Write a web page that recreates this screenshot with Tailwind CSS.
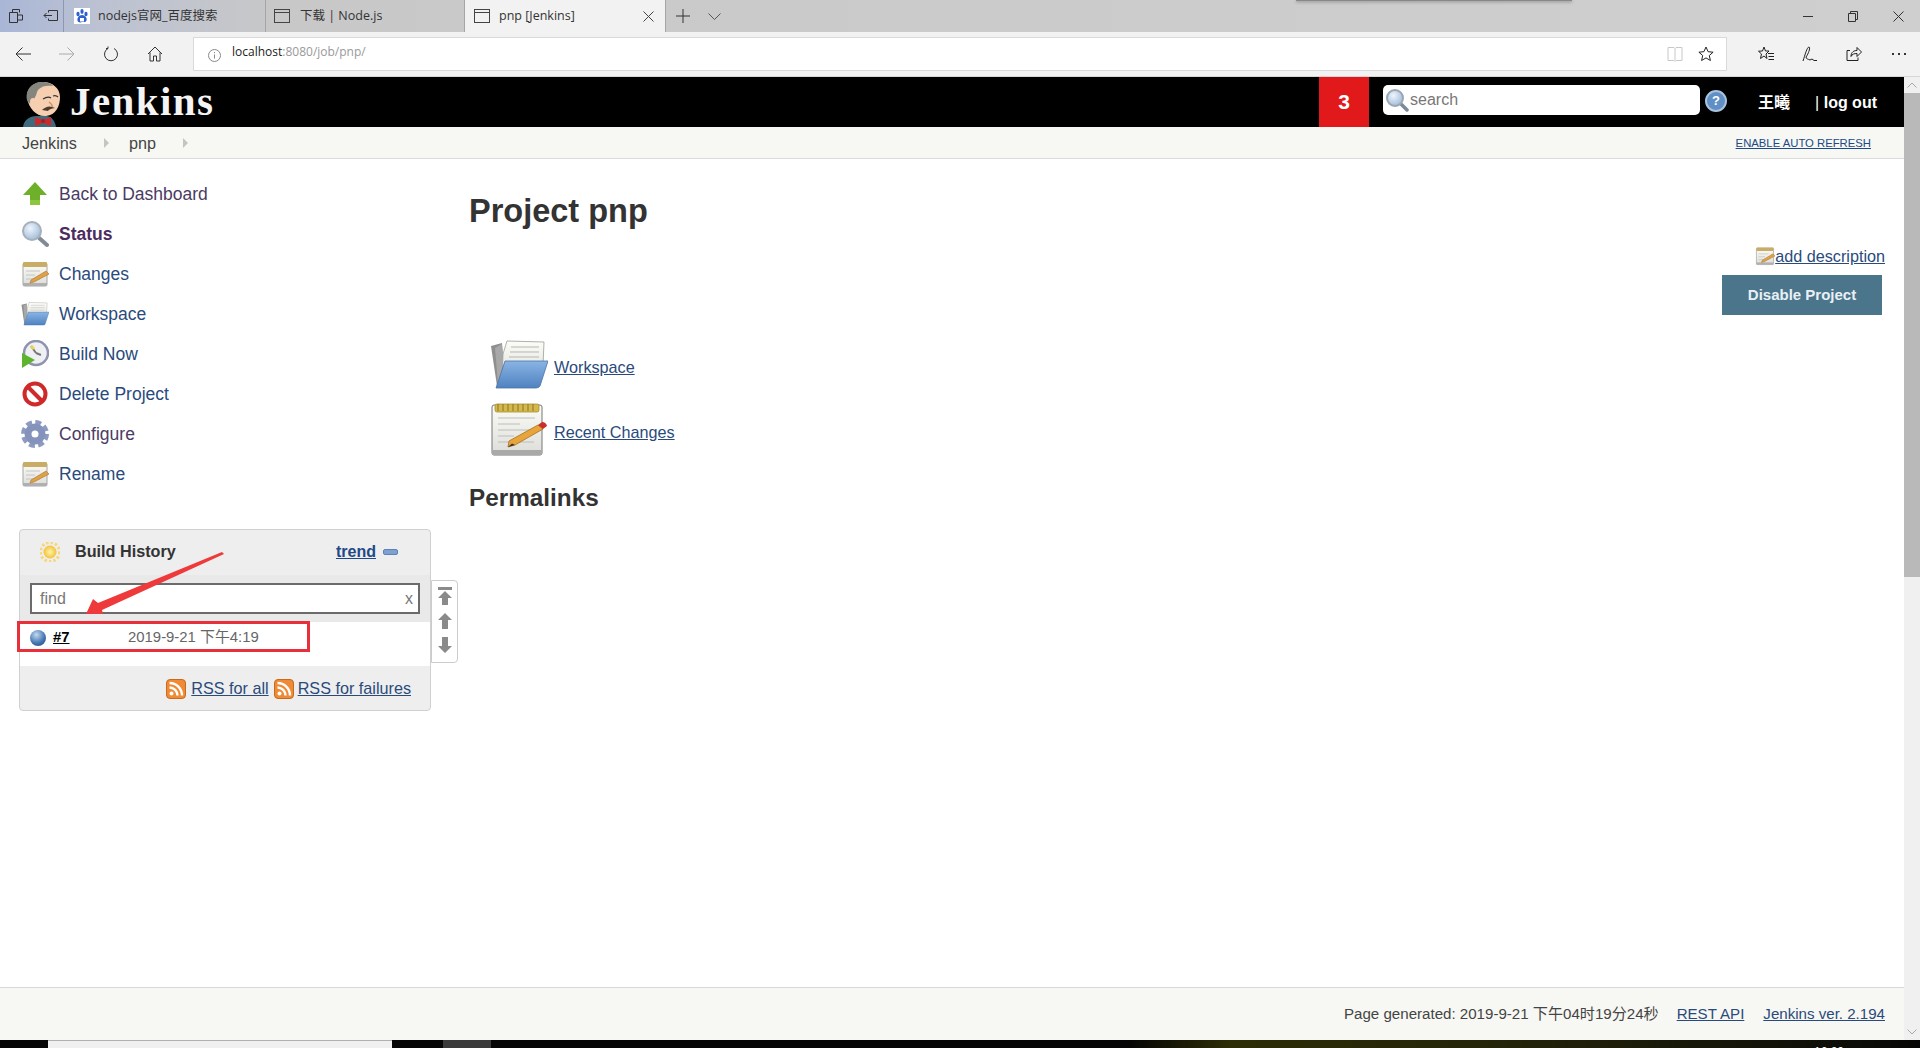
<!DOCTYPE html>
<html lang="zh-CN">
<head>
  <meta charset="UTF-8" />
  <title>pnp [Jenkins]</title>
  <script src="https://cdn.jsdelivr.net/npm/@tailwindcss/browser@4"></script>
</head>
<body class="w-[1920px] h-[1048px] overflow-hidden flex flex-col bg-white font-['Liberation_Sans','Noto_Sans_CJK_SC',sans-serif] text-[#333]">

  <!-- shared icons -->
  <svg class="absolute w-0 h-0">
    <defs>
      <linearGradient id="blueFolder" x1="0" y1="0" x2="0" y2="1"><stop offset="0" stop-color="#8ab4e4"/><stop offset="1" stop-color="#4f82c0"/></linearGradient>
      <linearGradient id="paper" x1="0" y1="0" x2="0" y2="1"><stop offset="0" stop-color="#fdfdf8"/><stop offset="1" stop-color="#dcdcd8"/></linearGradient>
      <radialGradient id="lens" cx="0.4" cy="0.35" r="0.7"><stop offset="0" stop-color="#eef5fc"/><stop offset="1" stop-color="#9dbad8"/></radialGradient>
      <radialGradient id="sun" cx="0.5" cy="0.5" r="0.5"><stop offset="0" stop-color="#fff4a8"/><stop offset="1" stop-color="#f2c23c"/></radialGradient>
      <symbol id="ic-folder" viewBox="0 0 58 50">
        <path d="M1 6 L12 3 L14 42 L7 46 Z" fill="#8f8f8f"/>
        <path d="M5 8 L12 4 L16 40 L8 44 Z" fill="#a8a8a8"/>
        <path d="M13 14 L17 1 L54 2 L53 26 L12 40 Z" fill="url(#paper)" stroke="#9a9a9a" stroke-width="0.8"/>
        <path d="M21 7 H49 M20 12 H49 M19 17 H49" stroke="#b5b5b5" stroke-width="1"/>
        <path d="M15 21 H58 L50 46 Q49 48 46 48 H6 Z" fill="url(#blueFolder)" stroke="#4a74a8" stroke-width="0.8"/>
      </symbol>
      <symbol id="ic-notepad" viewBox="0 0 58 56">
        <rect x="2" y="3" width="50" height="50" rx="2" fill="url(#paper)" stroke="#777" stroke-width="1"/>
        <rect x="2" y="48" width="50" height="5" fill="#a9a9a9"/>
        <rect x="5" y="2" width="44" height="8" rx="2" fill="#d4b84c" stroke="#a88f30" stroke-width="0.8"/>
        <path d="M8 2v7M13 2v7M18 2v7M23 2v7M28 2v7M33 2v7M38 2v7M43 2v7" stroke="#8b7526" stroke-width="1"/>
        <path d="M8 16H45M8 22H30M8 28H44M8 34H24M8 40H44" stroke="#bcbcbc" stroke-width="1"/>
        <path d="M19 39 L48 23 L53 27 L25 43 L18 45 Z" fill="#e8a53c" stroke="#a8701e" stroke-width="0.8"/>
        <path d="M48 23 L52 20 Q56 20 57 24 L53 27 Z" fill="#c9302c"/>
        <path d="M22 41.500 L18 45 L25 43 Z" fill="#333"/>
      </symbol>
      <symbol id="ic-pad-small" viewBox="0 0 28 28">
        <rect x="2" y="3" width="24" height="23" rx="1.500" fill="url(#paper)" stroke="#a5a5a5" stroke-width="1"/>
        <rect x="2" y="2" width="24" height="5" rx="1" fill="#c9ad67"/>
        <rect x="2" y="23" width="24" height="3" fill="#b0b0b0"/>
        <path d="M5 11H19M5 15H14M5 19H19" stroke="#c4c4c4" stroke-width="1"/>
        <path d="M10 20 L25 11 L28 14 L13 22 L9 23 Z" fill="#dfa048" stroke="#a9752a" stroke-width="0.6"/>
      </symbol>
      <symbol id="ic-rss" viewBox="0 0 20 20">
        <rect x="0.500" y="0.500" width="19" height="19" rx="3.500" fill="#ef8a35" stroke="#c96a1e" stroke-width="1"/>
        <circle cx="5.500" cy="14.500" r="2" fill="#fff"/>
        <path d="M3.500 8.500a8 8 0 0 1 8 8M3.500 4a12.500 12.500 0 0 1 12.500 12.500" fill="none" stroke="#fff" stroke-width="2.400"/>
      </symbol>
    </defs>
  </svg>

  <!-- browser tab strip -->
  <div class="h-8 flex shrink-0 text-[12.500px] text-[#333] bg-[linear-gradient(90deg,#a9b6d6_0,#bcc2d2_100px,#c8c8c8_280px,#cfcfcf_1920px)] font-['Open_Sans','Noto_Sans_CJK_SC',sans-serif]">
    <div class="w-[64px] flex items-center border-r border-[#8c97b3] pl-[9px] gap-[20px]">
      <svg class="w-[14px] h-[14px]" viewBox="0 0 14 14" fill="none" stroke="#333"><path d="M3.500 3.500V.5h7v3M.5 3.500h8v10h-8zM8.500 6h5v5h-5"/></svg>
      <svg class="w-[16px] h-[14px]" viewBox="0 0 16 14" fill="none" stroke="#333"><path d="M5.500 3.500V1.500h9v10h-9V9.500M9 6.500H1M3.500 4L1 6.500 3.500 9"/></svg>
    </div>
    <div class="w-[202px] flex items-center border-r border-[#a5a5a5] pl-[10px]">
      <svg class="w-4 h-4 mr-[8px]" viewBox="0 0 16 16"><rect width="16" height="16" fill="#fff"/><ellipse cx="4" cy="6" rx="1.600" ry="2.200" fill="#2f5fd0"/><ellipse cx="8" cy="3.500" rx="1.600" ry="2.400" fill="#2f5fd0"/><ellipse cx="12" cy="6" rx="1.600" ry="2.200" fill="#2f5fd0"/><path d="M8 7c-3 0-5 3-4.500 5.500S7 14.500 8 14s3.500 1 4.500-1.500S11 7 8 7z" fill="#2f5fd0"/><rect x="6" y="10" width="4" height="3.500" fill="#fff"/></svg>
      <span>nodejs官网_百度搜索</span>
    </div>
    <div class="w-[199px] flex items-center border-r border-[#a5a5a5] pl-[8px]">
      <svg class="w-4 h-4 mr-[10px]" viewBox="0 0 16 16" fill="none" stroke="#444"><rect x=".5" y="1.500" width="15" height="13"/><path d="M.5 4.500h15"/></svg>
      <span>下载 | Node.js</span>
    </div>
    <div class="w-[201px] flex items-center border-r border-[#a5a5a5] pl-[9px] bg-[#f2f2f2]">
      <svg class="w-4 h-4 mr-[9px]" viewBox="0 0 16 16" fill="none" stroke="#444"><rect x=".5" y="1.500" width="15" height="13"/><path d="M.5 4.500h15"/></svg>
      <span>pnp [Jenkins]</span>
      <svg class="w-[11px] h-[11px] ml-auto mr-[11px]" viewBox="0 0 11 11" stroke="#444"><path d="M.5.500l10 10M10.500.500l-10 10"/></svg>
    </div>
    <div class="flex items-center pl-[10px] gap-[18px]">
      <svg class="w-[14px] h-[14px]" viewBox="0 0 14 14" stroke="#333"><path d="M7 0v14M0 7h14"/></svg>
      <svg class="w-[13px] h-[7px]" viewBox="0 0 13 7" fill="none" stroke="#555"><path d="M.5.500l6 6 6-6"/></svg>
    </div>
    <div class="relative flex-1">
      <div class="absolute left-[575px] w-[276px] h-[1px] bg-[#888] shadow-[0_1px_3px_#666]"></div>
    </div>
    <div class="flex items-center pr-[16px] gap-[35px]">
      <div class="w-[10px] h-px bg-[#333]"></div>
      <svg class="w-[10px] h-[11px]" viewBox="0 0 10 11" fill="none" stroke="#333"><path d="M.5 2.500h7v8h-7zM2.500 2.500v-2h7v8h-2"/></svg>
      <svg class="w-[11px] h-[11px]" viewBox="0 0 11 11" stroke="#333"><path d="M.5.500l10 10M10.500.500l-10 10"/></svg>
    </div>
  </div>

  <!-- browser address row -->
  <div class="h-[45px] shrink-0 flex items-center bg-[#f2f2f2] border-b border-[#d6d6d6] pb-[1px]">
    <div class="w-[193px] flex items-center pl-[15px] gap-[28px]">
      <svg class="w-4 h-4" viewBox="0 0 16 16" fill="none" stroke="#333"><path d="M16 8H1M7.500 1.500L1 8l6.500 6.500"/></svg>
      <svg class="w-4 h-4" viewBox="0 0 16 16" fill="none" stroke="#aaa"><path d="M0 8h15M8.500 1.500L15 8l-6.500 6.500"/></svg>
      <svg class="w-4 h-4" viewBox="0 0 16 16" fill="none" stroke="#333"><path d="M5 2.500a6.500 6.500 0 1 0 6 0M5 2.500V.5M5 2.500H3"/></svg>
      <svg class="w-4 h-4" viewBox="0 0 16 16" fill="none" stroke="#333"><path d="M1 8l7-7 7 7M3 6.500V15h3.500v-5h3v5H13V6.500"/></svg>
    </div>
    <div class="w-[1534px] h-[34px] bg-white border border-[#d9d9d9] flex items-center pl-[14px] pr-[12px] text-[12px] font-['Open_Sans',sans-serif]">
      <svg class="w-[13px] h-[13px] mr-[11px] mt-[3px]" viewBox="0 0 13 13" fill="none" stroke="#888"><circle cx="6.500" cy="6.500" r="6"/><path d="M6.500 5.500v4M6.500 3v1.200"/></svg>
      <span class="text-[#222] -mt-[4px]">localhost<span class="text-[#999]">:8080/job/pnp/</span></span>
      <svg class="w-4 h-4 ml-auto" viewBox="0 0 16 16" fill="none" stroke="#c8c8c8"><path d="M1 1.500h6l1 1 1-1h6v13H9l-1 1-1-1H1zM8 2.500v12"/></svg>
      <svg class="w-4 h-4 ml-[15px]" viewBox="0 0 16 16" fill="none" stroke="#222"><path d="M8 1l2.100 4.700 5 .5-3.800 3.300 1.100 5L8 11.900 3.600 14.500l1.100-5L.9 6.200l5-.5z"/></svg>
    </div>
    <div class="flex items-center pl-[31px] gap-[28px]">
      <svg class="w-4 h-4" viewBox="0 0 16 16" fill="none" stroke="#222"><path d="M6 1l1.500 4H11L8 8l1 4.500-3-2.500-3.500 2.500L3.500 8 .5 5.200 4.500 5zM10 7.500h6M10.500 10.500H16M10.500 13.500H16"/></svg>
      <svg class="w-4 h-4" viewBox="0 0 16 16" fill="none" stroke="#222"><path d="M1 15C3 9 5 1 7 1c1.500 0 0 6-3 10 0 2 2 2 4 3l2-1 2 1.500h3"/></svg>
      <svg class="w-4 h-4" viewBox="0 0 16 16" fill="none" stroke="#222"><path d="M4 4.500H1v10h11v-3M5 10.500C5 6 8 4.500 11 4.500V1.500l4.500 4.500-4.500 4.500V7.500C8.500 7.500 6 8 5 10.500z"/></svg>
      <div class="flex gap-[4px] ml-[2px]"><i class="w-[2px] h-[2px] bg-[#333]"></i><i class="w-[2px] h-[2px] bg-[#333]"></i><i class="w-[2px] h-[2px] bg-[#333]"></i></div>
    </div>
  </div>

  <div class="flex-1 flex min-h-0">
    <div class="flex-1 flex flex-col min-w-0">

      <!-- jenkins header -->
      <header class="h-[50px] shrink-0 bg-black flex items-center pr-[27px] text-white">
        <svg class="w-[42px] h-[46px] ml-[22px] self-end" viewBox="0 0 42 46">
          <path d="M1 46c1-7 6-11 14-11h10c5 1 8 5 9 11z" fill="#3f6a7c"/>
          <path d="M5 17C4 7 12 1 21 1c9 0 17 6 17 15 0 9-4 18-14 19-9 1-17-7-19-18z" fill="#f5cfb0"/>
          <path d="M5 19C3 9 10 1 20 1c5 0 9 1 11 4-6-1-11 0-14 3-3 3-2 6-4 8l-2 7c-2 0-5-1-6-4z" fill="#85857f"/>
          <ellipse cx="11" cy="21" rx="3" ry="4" fill="#f5cfb0"/>
          <path d="M21 18q5-3 8-1M31 15q3-1 5 1" fill="none" stroke="#333" stroke-width="1.300"/>
          <path d="M20 29q6-6 13-2-6 1-7 3z" fill="#4f3b2e"/>
          <path d="M27 21q4 3 3 5" fill="none" stroke="#c98d6a" stroke-width="1.500"/>
          <path d="M13 36l8 3 8-3v9l-8-3-8 3z" fill="#cc2a2a"/>
          <circle cx="21" cy="40" r="2" fill="#a51f1f"/>
        </svg>
        <span class="ml-[6px] mb-[2px] font-['Liberation_Serif',serif] font-bold text-[41px] leading-none tracking-[1.400px] text-[#f4f4f4]">Jenkins</span>
        <div class="ml-auto self-stretch w-[50px] bg-[#e2191a] flex items-center justify-center font-bold text-[21px]">3</div>
        <div class="ml-[14px] mb-[4px] w-[317px] h-[30px] bg-white rounded-[5px] flex items-center pl-[2px] text-[16px] text-[#777]">
          <svg class="w-[24px] h-[24px] mr-[1px]" viewBox="0 0 24 24"><path d="M15 15l7 7" stroke="#7d8a96" stroke-width="3.500" stroke-linecap="round"/><circle cx="10" cy="10" r="8" fill="url(#lens)" stroke="#9aa6b2" stroke-width="2"/></svg>
          <span>search</span>
        </div>
        <div class="ml-[5px] mb-[2px] w-[22px] h-[22px] rounded-full bg-[#5f8fc4] border-2 border-[#a9c3de] flex items-center justify-center text-[13px] font-bold text-white">?</div>
        <span class="ml-[31px] mt-[2px] text-[16px] font-bold">王曦</span>
        <span class="ml-[25px] mt-[2px] text-[16px] font-bold"><span class="font-normal">|</span> log out</span>
      </header>

      <!-- breadcrumbs -->
      <div class="h-8 shrink-0 bg-[#f7f8f3] border-b border-[#dcdcdc] flex items-center pl-[22px] pr-[33px] pt-[1px] text-[16.200px] text-[#444]">
        <span>Jenkins</span>
        <i class="ml-[27px] w-0 h-0 border-y-[5px] border-y-transparent border-l-[5px] border-l-[#c4c4c4]"></i>
        <span class="ml-[20px]">pnp</span>
        <i class="ml-[27px] w-0 h-0 border-y-[5px] border-y-transparent border-l-[5px] border-l-[#c4c4c4]"></i>
        <a href="#" class="ml-auto text-[11.300px] underline text-[#204a87]">ENABLE AUTO REFRESH</a>
      </div>

      <div class="flex-1 flex min-h-0">
        <!-- side panel -->
        <aside class="w-[469px] shrink-0 pt-[15px]">
          <nav class="text-[17.500px]">
            <a href="#" class="h-10 flex items-center pl-[21px] gap-[10px] text-[#4a3b63]">
              <svg class="w-7 h-7" viewBox="0 0 28 28"><path d="M14 2L26 15H19V25H9V15H2z" fill="#6fb02a"/><path d="M9 20h10v5H9z" fill="#8cc63f"/></svg>
              Back to Dashboard
            </a>
            <a href="#" class="h-10 flex items-center pl-[21px] gap-[10px] font-bold text-[#4c2c5e]">
              <svg class="w-7 h-7" viewBox="0 0 28 28"><path d="M17 17l9 8" stroke="#808b96" stroke-width="4" stroke-linecap="round"/><circle cx="11" cy="11" r="9" fill="url(#lens)" stroke="#a7b0ba" stroke-width="2"/></svg>
              Status
            </a>
            <a href="#" class="h-10 flex items-center pl-[21px] gap-[10px] text-[#2a4a7c]">
              <svg class="w-7 h-7"><use href="#ic-pad-small"/></svg>
              Changes
            </a>
            <a href="#" class="h-10 flex items-center pl-[21px] gap-[10px] text-[#2a4a7c]">
              <svg class="w-7 h-7"><use href="#ic-folder"/></svg>
              Workspace
            </a>
            <a href="#" class="h-10 flex items-center pl-[21px] gap-[10px] text-[#2a4a7c]">
              <svg class="w-7 h-7" viewBox="0 0 28 28"><circle cx="15" cy="13" r="12" fill="#eef0f4" stroke="#8f93ad" stroke-width="2.500"/><path d="M15 13L10 6M15 13l5 2" stroke="#777" stroke-width="2"/><path d="M10 6l3 3" stroke="#e8d35a" stroke-width="3"/><path d="M1 13L14 20 1 28z" fill="#5fb42e"/></svg>
              Build Now
            </a>
            <a href="#" class="h-10 flex items-center pl-[21px] gap-[10px] text-[#2a4a7c]">
              <svg class="w-7 h-7" viewBox="0 0 28 28"><circle cx="14" cy="14" r="10.500" fill="#fff" stroke="#cf2a2a" stroke-width="4"/><path d="M6.500 6.500l15 15" stroke="#cf2a2a" stroke-width="4"/></svg>
              Delete Project
            </a>
            <a href="#" class="h-10 flex items-center pl-[21px] gap-[10px] text-[#4a3b63]">
              <svg class="w-7 h-7" viewBox="0 0 28 28"><circle cx="14" cy="14" r="12" fill="none" stroke="#8d9bc2" stroke-width="4" stroke-dasharray="6 3.420"/><circle cx="14" cy="14" r="7" fill="none" stroke="#8593bc" stroke-width="7"/></svg>
              Configure
            </a>
            <a href="#" class="h-10 flex items-center pl-[21px] gap-[10px] text-[#2a4a7c]">
              <svg class="w-7 h-7"><use href="#ic-pad-small"/></svg>
              Rename
            </a>
          </nav>

          <!-- build history card -->
          <div class="relative mt-[35px] ml-[19px] w-[412px] h-[182px] bg-[#eeeeee] border border-[#d0d0d0] rounded-[4px] flex flex-col">
            <div class="h-[45px] flex items-center pl-[20px] pr-[32px] pb-[2px]">
              <svg class="w-5 h-5" viewBox="0 0 20 20"><circle cx="10" cy="10" r="9.500" fill="none" stroke="#f6d77c" stroke-width="3" stroke-dasharray="2.500 2"/><circle cx="10" cy="10" r="6.500" fill="url(#sun)"/></svg>
              <span class="ml-[15px] font-bold text-[16.200px] text-[#333]">Build History</span>
              <a href="#" class="ml-auto font-bold text-[16px] underline text-[#204a87]">trend</a>
              <span class="ml-[7px] w-[15px] h-[6px] rounded-[2px] bg-[#7ea1d2] border border-[#5c82b8]"></span>
            </div>
            <div class="h-[47px] bg-[#e9e9e9] flex items-center px-[10px]">
              <div class="w-full h-[31px] bg-white border-2 border-[#6b6b6b] flex items-center justify-between pl-[8px] pr-[5px] pt-[1px] text-[16px] text-[#777]">
                <span>find</span><span>x</span>
              </div>
            </div>
            <div class="h-[44px] bg-white">
              <div class="h-[31px] flex items-center pl-[10px] text-[14.900px]">
                <span class="w-4 h-4 rounded-full bg-[radial-gradient(circle_at_40%_30%,#c4d9ef,#4678b4_55%,#173f75)]"></span>
                <a href="#" class="ml-[7px] w-[75px] font-bold underline text-black">#7</a>
                <span class="text-[#666]">2019-9-21 下午4:19</span>
              </div>
            </div>
            <div class="flex-1 flex items-center justify-end pr-[19px] pt-[1px] text-[16.200px]">
              <svg class="w-5 h-5"><use href="#ic-rss"/></svg>
              <a href="#" class="ml-[5px] underline text-[#2a4a7c]">RSS for all</a>
              <svg class="w-5 h-5 ml-[5px]"><use href="#ic-rss"/></svg>
              <a href="#" class="ml-[4px] underline text-[#2a4a7c]">RSS for failures</a>
            </div>

            <!-- paging buttons beside the card -->
            <div class="absolute left-[411px] top-[50px] w-[27px] h-[83px] bg-white border border-[#ccc] rounded-r-[4px] flex flex-col items-center pt-[6px] gap-[8px]">
              <svg class="w-[14px] h-[18px]" viewBox="0 0 14 18" fill="#8a8a8a"><path d="M0 0h14v3H0zM7 4l7 7H10v7H4v-7H0z"/></svg>
              <svg class="w-[14px] h-[16px]" viewBox="0 0 14 16" fill="#8a8a8a"><path d="M7 0l7 7H10v9H4V7H0z"/></svg>
              <svg class="w-[14px] h-[16px]" viewBox="0 0 14 16" fill="#8a8a8a"><path d="M7 16l7-7H10V0H4v9H0z"/></svg>
            </div>

            <!-- screenshot annotation -->
            <div class="absolute left-[-3px] top-[91px] w-[293px] h-[31px] border-[3px] border-[#e8303a]"></div>
            <svg class="absolute left-0 top-0 w-[240px] h-[100px] overflow-visible" viewBox="0 0 240 100"><polygon points="202,22 204,24 82,80 83,84 66,84 73,69 78,73" fill="#ee3a3a"/></svg>
          </div>
        </aside>

        <!-- main content -->
        <main class="flex-1 min-w-0">
          <h1 class="pt-[33px] text-[32.500px] leading-[38px] font-bold text-[#333]">Project pnp</h1>
          <div class="flex flex-col items-end mt-[16px] pr-[19px]">
            <div class="flex items-center h-5">
              <svg class="w-5 h-5" viewBox="0 0 28 28"><use href="#ic-pad-small"/></svg>
              <a href="#" class="text-[16.200px] underline text-[#2a4a7c]">add description</a>
            </div>
            <button class="mt-[9px] mr-[3px] w-[160px] h-10 bg-[#4b758b] text-[#e8f0f5] font-bold text-[15px]">Disable Project</button>
          </div>
          <div class="mt-[17px] pl-[21px] text-[16.200px]">
            <div class="h-[65px] flex items-center">
              <svg class="w-[58px] h-[50px]"><use href="#ic-folder"/></svg>
              <a href="#" class="ml-[6px] mt-[5px] underline text-[#2a4a7c]">Workspace</a>
            </div>
            <div class="h-[65px] flex items-center">
              <svg class="w-[58px] h-[56px]"><use href="#ic-notepad"/></svg>
              <a href="#" class="ml-[6px] mt-[5px] underline text-[#2a4a7c]">Recent Changes</a>
            </div>
          </div>
          <h2 class="mt-[22px] text-[24.300px] leading-[28px] font-bold text-[#333]">Permalinks</h2>
        </main>
      </div>

      <!-- footer -->
      <footer class="h-[53px] shrink-0 bg-[#f7f8f3] border-t border-[#d8d8d8] flex items-center justify-end pr-[19px] pt-[1px] text-[15.100px] text-[#444]">
        <span>Page generated: 2019-9-21 下午04时19分24秒</span>
        <a href="#" class="ml-[18px] underline text-[#2a4a7c]">REST API</a>
        <a href="#" class="ml-[19px] underline text-[#2a4a7c]">Jenkins ver. 2.194</a>
      </footer>
    </div>

    <!-- page scrollbar -->
    <div class="w-4 shrink-0 bg-[#f0f0f0] flex flex-col">
      <div class="h-4 flex items-center justify-center">
        <svg class="w-[10px] h-[6px]" viewBox="0 0 10 6" fill="none" stroke="#a8a8a8"><path d="M.5 5.500L5 1l4.500 4.500"/></svg>
      </div>
      <div class="h-[484px] bg-[#b9b9b9]"></div>
      <div class="mt-auto h-4 flex items-center justify-center">
        <svg class="w-[10px] h-[6px]" viewBox="0 0 10 6" fill="none" stroke="#a8a8a8"><path d="M.5.500L5 5l4.500-4.500"/></svg>
      </div>
    </div>
  </div>

  <!-- desktop taskbar, cut off at the window bottom -->
  <div class="h-2 shrink-0 flex overflow-hidden bg-[linear-gradient(90deg,#050505_0,#050505_1130px,#2c2c06_1230px,#24240a_1500px,#0c0c08_1860px,#050505_1920px)]">
    <div class="ml-[48px] w-[344px] bg-[#f0f0f0] border-t border-[#b0b0b0]"></div>
    <div class="ml-[51px] w-[48px] bg-[#3a3a3a]"></div>
    <div class="ml-[1323px] pt-[5px] text-[12px] leading-[14px] text-white">16:20</div>
  </div>

</body>
</html>
